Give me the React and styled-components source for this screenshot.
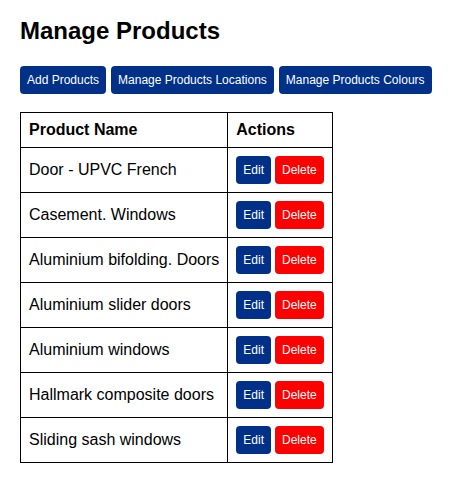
import React from 'react'
import styled, { createGlobalStyle } from 'styled-components'

const GlobalStyle = createGlobalStyle`
  body {
    margin: 0;
    background: #fff;
    font-family: "Liberation Sans", Arial, sans-serif;
    color: #000;
  }
`

const Page = styled.div`
  padding: 17px 20px 20px;
`

const Title = styled.h1`
  margin: 0 0 21px;
  font-size: 24px;
  font-weight: bold;
  line-height: 28px;
`

const Toolbar = styled.div`
  display: flex;
  gap: 5px;
  margin-bottom: 18px;
`

const Button = styled.button`
  font-family: "Liberation Sans", Arial, sans-serif;
  font-size: 12px;
  line-height: 14px;
  padding: 7px;
  border: none;
  border-radius: 4px;
  color: #fff;
  background: ${p => (p.$danger ? '#ff0000' : '#003087')};
  cursor: pointer;
`

const Table = styled.table`
  border-collapse: collapse;
  font-size: 16px;
`

const Th = styled.th`
  border: 1px solid #000;
  padding: 8px;
  text-align: left;
  font-weight: bold;
  line-height: 18px;
`

const Td = styled.td`
  border: 1px solid #000;
  padding: 8px;
  height: 28px;
  line-height: 18px;
`

const Actions = styled.div`
  display: flex;
  gap: 4px;
`

const products = [
  'Door - UPVC French',
  'Casement. Windows',
  'Aluminium bifolding. Doors',
  'Aluminium slider doors',
  'Aluminium windows',
  'Hallmark composite doors',
  'Sliding sash windows',
]

export default function App() {
  return (
    <Page>
      <GlobalStyle />
      <Title>Manage Products</Title>
      <Toolbar>
        <Button>Add Products</Button>
        <Button>Manage Products Locations</Button>
        <Button>Manage Products Colours</Button>
      </Toolbar>
      <Table>
        <thead>
          <tr>
            <Th>Product Name</Th>
            <Th>Actions</Th>
          </tr>
        </thead>
        <tbody>
          {products.map(name => (
            <tr key={name}>
              <Td>{name}</Td>
              <Td>
                <Actions>
                  <Button>Edit</Button>
                  <Button $danger>Delete</Button>
                </Actions>
              </Td>
            </tr>
          ))}
        </tbody>
      </Table>
    </Page>
  )
}
